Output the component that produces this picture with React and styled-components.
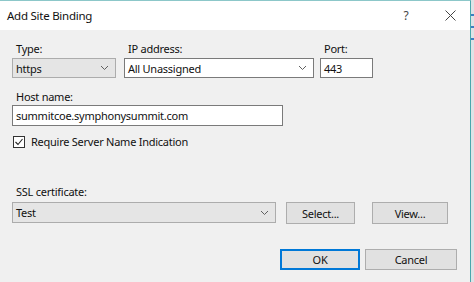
import React from "react";
import styled, { createGlobalStyle } from "styled-components";

const Global = createGlobalStyle`
  html, body { margin: 0; padding: 0; background: #e8eef0; }
  body { font-family: "Noto Sans", "Open Sans", "Liberation Sans", sans-serif; font-size: 11px; letter-spacing: -0.25px; color: #111; }
  #root { width: 474px; height: 282px; overflow: hidden; }
`;

const Screen = styled.div`
  display: flex;
  width: 474px;
  height: 282px;
`;

const Window = styled.div`
  width: 471px;
  height: 282px;
  border-top: 1px solid #8cc7c9;
  border-right: 1px solid #4aa7ad;
  box-sizing: border-box;
  display: flex;
  flex-direction: column;
  background: #f0f0f0;
`;

const Side = styled.div`
  flex: 1;
  background: #dfe3e6;
  display: flex;
  flex-direction: column;
  gap: 10px;
  padding-top: 14px;
`;

const SideMark = styled.div`
  height: 2px;
  background: #3d7fc2;
`;

const TitleBar = styled.div`
  height: 29px;
  background: #fff;
  display: flex;
  align-items: center;
  padding-left: 7px;
`;

const Title = styled.div`
  flex: 1;
  font-size: 11.5px;
`;

const TitleBtn = styled.div`
  width: ${(p) => p.w}px;
  display: flex;
  justify-content: center;
  align-items: center;
  color: #444;
  font-size: 12px;
`;

const Body = styled.div`
  flex: 1;
  padding: 11px 0 0 12px;
  display: flex;
  flex-direction: column;
`;

const Row = styled.div`
  display: flex;
  align-items: flex-start;
  gap: ${(p) => p.gap || 0}px;
  margin-top: ${(p) => p.mt || 0}px;
`;

const Field = styled.div`
  display: flex;
  flex-direction: column;
  width: ${(p) => p.w}px;
`;

const Label = styled.div`
  height: 16px;
  line-height: 16px;
  padding-left: 4px;
  margin-bottom: ${(p) => p.mb ?? 1}px;
  white-space: nowrap;
`;

const Box = styled.div`
  box-sizing: border-box;
  height: ${(p) => p.h || 20}px;
  border: 1px solid ${(p) => (p.grey ? "#acacac" : "#7a7a7a")};
  background: ${(p) => (p.grey ? "#e5e5e5" : "#fff")};
  display: flex;
  align-items: center;
  padding: 0 0 0 3px;
  white-space: nowrap;
`;

const BoxText = styled.div`
  flex: 1;
`;

const Chevron = styled.svg`
  width: 9px;
  height: 6px;
  margin-right: 6px;
`;

const CheckRow = styled.div`
  display: flex;
  align-items: center;
  gap: 6px;
  margin-top: 9px;
  padding-left: 1px;
  height: 13px;
`;

const CheckBox = styled.div`
  box-sizing: border-box;
  width: 12px;
  height: 12px;
  border: 1px solid #333;
  background: #fff;
  display: flex;
  align-items: center;
  justify-content: center;
`;

const Button = styled.div`
  box-sizing: border-box;
  width: ${(p) => p.w}px;
  height: ${(p) => p.h || 22}px;
  border: ${(p) => (p.primary ? "2px solid #0078d7" : "1px solid #adadad")};
  background: #e1e1e1;
  display: flex;
  align-items: center;
  justify-content: center;
`;

const Chev = () => (
  <Chevron viewBox="0 0 9 6">
    <path d="M1 1 L4.5 4.5 L8 1" fill="none" stroke="#606060" strokeWidth="1" />
  </Chevron>
);

export default function App() {
  return (
    <>
      <Global />
      <Screen>
        <Window>
          <TitleBar>
            <Title>Add Site Binding</Title>
            <TitleBtn w={48}>?</TitleBtn>
            <TitleBtn w={40}>
              <svg width="11" height="11" viewBox="0 0 11 11">
                <path d="M0.5 0.5 L10.5 10.5 M10.5 0.5 L0.5 10.5" stroke="#444" strokeWidth="1" />
              </svg>
            </TitleBtn>
          </TitleBar>
          <Body>
            <Row>
              <Field w={104}>
                <Label>Type:</Label>
                <Box grey>
                  <BoxText>https</BoxText>
                  <Chev />
                </Box>
              </Field>
              <Field w={190} style={{ marginLeft: 8 }}>
                <Label>IP address:</Label>
                <Box>
                  <BoxText>All Unassigned</BoxText>
                  <Chev />
                </Box>
              </Field>
              <Field w={53} style={{ marginLeft: 6 }}>
                <Label>Port:</Label>
                <Box>
                  <BoxText>443</BoxText>
                </Box>
              </Field>
            </Row>
            <Row mt={11}>
              <Field w={271}>
                <Label mb={0}>Host name:</Label>
                <Box h={21}>
                  <BoxText>summitcoe.symphonysummit.com</BoxText>
                </Box>
              </Field>
            </Row>
            <CheckRow>
              <CheckBox>
                <svg width="10" height="10" viewBox="0 0 10 10">
                  <path d="M1.5 5 L4 7.5 L8.5 2" fill="none" stroke="#222" strokeWidth="1.1" />
                </svg>
              </CheckBox>
              <span>Require Server Name Indication</span>
            </CheckRow>
            <Row mt={36}>
              <Field w={264}>
                <Label mb={2}>SSL certificate:</Label>
                <Box grey h={21}>
                  <BoxText>Test</BoxText>
                  <Chev />
                </Box>
              </Field>
              <Button w={69} style={{ marginTop: 18, marginLeft: 10 }}>Select...</Button>
              <Button w={76} style={{ marginTop: 18, marginLeft: 17 }}>View...</Button>
            </Row>
            <Row mt={25} gap={5} style={{ paddingLeft: 268 }}>
              <Button primary w={80} h={21}>OK</Button>
              <Button w={92} h={21}>Cancel</Button>
            </Row>
          </Body>
        </Window>
        <Side>
          <SideMark />
          <SideMark />
          <SideMark />
        </Side>
      </Screen>
    </>
  );
}
